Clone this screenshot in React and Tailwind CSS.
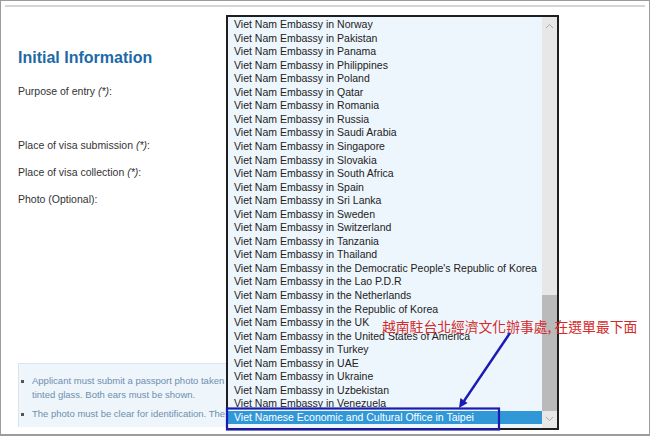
import React from "react";

const embassies = [
  "Viet Nam Embassy in New Zealand",
  "Viet Nam Embassy in Norway",
  "Viet Nam Embassy in Pakistan",
  "Viet Nam Embassy in Panama",
  "Viet Nam Embassy in Philippines",
  "Viet Nam Embassy in Poland",
  "Viet Nam Embassy in Qatar",
  "Viet Nam Embassy in Romania",
  "Viet Nam Embassy in Russia",
  "Viet Nam Embassy in Saudi Arabia",
  "Viet Nam Embassy in Singapore",
  "Viet Nam Embassy in Slovakia",
  "Viet Nam Embassy in South Africa",
  "Viet Nam Embassy in Spain",
  "Viet Nam Embassy in Sri Lanka",
  "Viet Nam Embassy in Sweden",
  "Viet Nam Embassy in Switzerland",
  "Viet Nam Embassy in Tanzania",
  "Viet Nam Embassy in Thailand",
  "Viet Nam Embassy in the Democratic People's Republic of Korea",
  "Viet Nam Embassy in the Lao P.D.R",
  "Viet Nam Embassy in the Netherlands",
  "Viet Nam Embassy in the Republic of Korea",
  "Viet Nam Embassy in the UK",
  "Viet Nam Embassy in the United States of America",
  "Viet Nam Embassy in Turkey",
  "Viet Nam Embassy in UAE",
  "Viet Nam Embassy in Ukraine",
  "Viet Nam Embassy in Uzbekistan",
  "Viet Nam Embassy in Venezuela",
  "Viet Namese Economic and Cultural Office in Taipei",
];

function Label({ text, required }) {
  return (
    <p className="text-[10.5px] leading-[14px] text-[#333]">
      {text}
      {required && <i> (*)</i>}:
    </p>
  );
}

function Chevron({ down }) {
  return (
    <svg width="9" height="6" viewBox="0 0 9 6" className="block">
      <path
        d={down ? "M1 1 L4.5 4.5 L8 1" : "M1 5 L4.5 1.5 L8 5"}
        fill="none"
        stroke="#a9a9a9"
        strokeWidth="1"
      />
    </svg>
  );
}

export default function App() {
  return (
    <div className="relative w-[650px] h-[436px] overflow-hidden bg-white border border-b-2 border-[#9c9c9c] font-['Liberation_Sans',Arial,sans-serif]">
      <div className="mx-[4px] mt-[4px] h-[2px] bg-[#d4d4d4]" />

      <div className="pl-[17px] pt-[41px]">
        <h2 className="text-[16px] leading-[20px] font-bold text-[#1d69a6]">
          Initial Information
        </h2>
        <div className="mt-[16px]">
          <Label text="Purpose of entry" required />
        </div>
        <div className="mt-[40px]">
          <Label text="Place of visa submission" required />
        </div>
        <div className="mt-[13px]">
          <Label text="Place of visa collection" required />
        </div>
        <div className="mt-[13px]">
          <Label text="Photo (Optional)" />
        </div>

        <div className="mt-[157px] w-[530px] h-[64px] overflow-hidden bg-[#eef5fb] border-t border-l border-[#d9e5ef] pl-[2px] pt-[10px] text-[9.5px] leading-[14px] text-[#6f8fae]">
          <div className="flex">
            <span className="w-[11px] shrink-0 pt-[6px]">
              <span className="block w-[3px] h-[3px] bg-[#555]" />
            </span>
            <span className="whitespace-nowrap">
              Applicant must submit a passport photo taken within the last 6 months, without glasses or
              <br />
              tinted glass. Both ears must be shown.
            </span>
          </div>
          <div className="flex mt-[5px]">
            <span className="w-[11px] shrink-0 pt-[6px]">
              <span className="block w-[3px] h-[3px] bg-[#555]" />
            </span>
            <span className="whitespace-nowrap">
              The photo must be clear for identification. The photo must not be edited.
            </span>
          </div>
        </div>
      </div>

      {/* open dropdown list */}
      <div className="absolute left-[225px] top-[14px] w-[333px] h-[415px] border-2 border-[#1e1e1e] flex bg-white">
        <div className="flex-1 overflow-hidden bg-[#eef6fd]">
          <div className="mt-[-12.5px]">
            {embassies.map((name, i) => {
              const selected = i === embassies.length - 1;
              return (
                <div
                  key={name}
                  className={
                    selected
                      ? "h-[13.55px] leading-[13.55px] pl-[6px] text-[10.5px] whitespace-nowrap bg-[#3198d8] text-white"
                      : "h-[13.55px] leading-[13.55px] pl-[6px] text-[10.5px] whitespace-nowrap text-[#222]"
                  }
                >
                  {name}
                </div>
              );
            })}
          </div>
        </div>
        <div className="relative w-[15px] bg-[#e7e7e7] flex flex-col items-center justify-between py-[6px]">
          <Chevron />
          <div className="absolute left-0 top-[278px] w-[15px] h-[116px] bg-[#bababa]" />
          <Chevron down />
        </div>
      </div>

      {/* annotation */}
      <span className="absolute left-[381px] top-[316px] text-[13.8px] leading-[18px] text-[#d42a2a] whitespace-nowrap font-['Noto_Sans_CJK_TC',sans-serif]">
        越南駐台北經濟文化辦事處, 在選單最下面
      </span>
      <svg
        className="absolute left-[-1px] top-[-1px] pointer-events-none"
        width="650"
        height="436"
        viewBox="0 0 650 436"
      >
        <rect x="227" y="408.5" width="272" height="21" fill="none" stroke="#1b1bb3" strokeWidth="2.2" />
        <line x1="510" y1="333" x2="464" y2="401" stroke="#1b1bb3" strokeWidth="2.4" />
        <polygon points="459,408 467.6,402.9 460.4,398.1" fill="#1b1bb3" />
      </svg>
    </div>
  );
}
